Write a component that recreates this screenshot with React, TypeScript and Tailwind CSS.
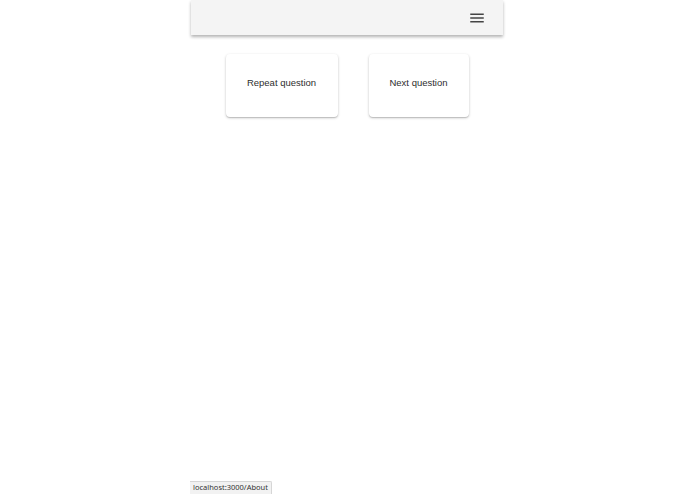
export default function App() {
  return (
    <div className="relative h-[494px] w-full bg-white" style={{ fontFamily: "'Liberation Sans', Arial, sans-serif" }}>
      <div className="ml-[191px] flex h-full w-[312px] flex-col">
        {/* ── Header ── */}
        <header className="flex h-[35px] shrink-0 items-center justify-end bg-[#f4f4f4] pr-[17px] shadow-[0_2px_3px_rgba(0,0,0,0.3)]">
          <svg width="18" height="18" viewBox="0 0 24 24" fill="#444" aria-hidden="true">
            <path d="M3 18h18v-2H3v2zm0-5h18v-2H3v2zm0-7v2h18V6H3z" />
          </svg>
        </header>

        {/* ── Actions ── */}
        <div className="mt-[19px] flex justify-center gap-[31px]">
          <button className="flex h-[63px] w-[112px] items-center justify-center rounded-[4px] bg-white pb-[4px] text-[9.5px] text-[#2e2e2e] shadow-[0_1px_3px_rgba(0,0,0,0.2),0_1px_1px_rgba(0,0,0,0.14)]">
            Repeat question
          </button>
          <button className="flex h-[63px] w-[100px] items-center justify-center rounded-[4px] bg-white pb-[4px] text-[9.5px] text-[#2e2e2e] shadow-[0_1px_3px_rgba(0,0,0,0.2),0_1px_1px_rgba(0,0,0,0.14)]">
            Next question
          </button>
        </div>
      </div>

      {/* ── Browser status bubble ── */}
      <div
        className="absolute bottom-0 left-[190px] flex h-[13px] items-center rounded-tr-[2px] border border-b-0 border-l-0 border-[#d6d6d6] bg-[#f2f2f2] px-[3px] text-[7.5px] leading-none text-[#333]"
        style={{ fontFamily: "'Noto Sans', 'Open Sans', sans-serif" }}
      >
        localhost:3000/About
      </div>
    </div>
  );
}
